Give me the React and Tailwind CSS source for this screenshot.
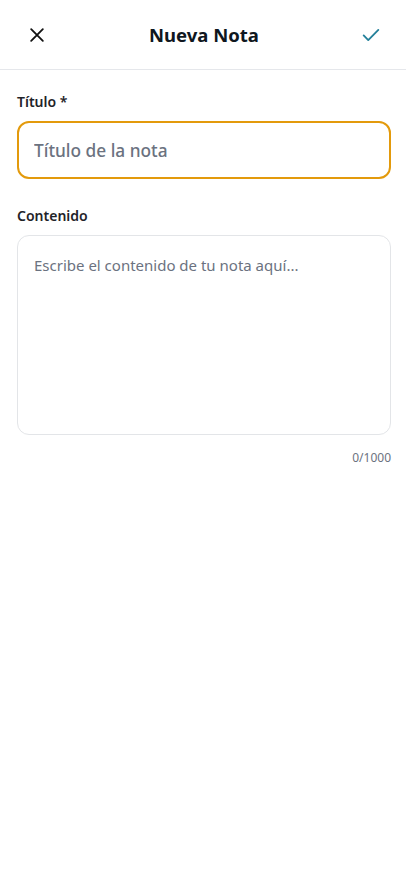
import React, { useState } from "react";

export default function App() {
  const [title, setTitle] = useState("");
  const [content, setContent] = useState("");

  return (
    <div
      className="min-h-screen bg-white text-[#1a1d21]"
      style={{ fontFamily: '"Noto Sans", "Open Sans", sans-serif' }}
    >
      {/* Header */}
      <div className="flex h-[70px] items-center justify-between border-b border-[#e5e7eb] pl-[25px] pr-[23px]">
        <button className="flex h-6 w-6 items-center justify-center text-[#111]">
          <svg width="20" height="20" viewBox="0 0 24 24" fill="none" stroke="currentColor" strokeWidth="2.2" strokeLinecap="round">
            <path d="M5 5l14 14M19 5L5 19" />
          </svg>
        </button>
        <h1 className="text-[18.5px] font-bold text-[#0f1720]">Nueva Nota</h1>
        <button className="flex h-6 w-6 items-center justify-center text-[#24809a]">
          <svg width="22" height="22" viewBox="0 0 24 24" fill="none" stroke="currentColor" strokeWidth="2" strokeLinecap="round" strokeLinejoin="round">
            <path d="M4 12.5l5 5L20 6.5" />
          </svg>
        </button>
      </div>

      <div className="pl-[17px] pr-[15px] pt-[21px]">
        <label className="block text-[14px] font-semibold text-[#1f2328]">Título *</label>
        <input
          autoFocus
          value={title}
          onChange={(e) => setTitle(e.target.value)}
          placeholder="Título de la nota"
          className="mt-[9px] h-[58px] w-full rounded-[12px] border-2 border-[#e39a0c] px-[15px] text-[17.3px] font-medium text-[#1f2328] caret-black outline-none placeholder:text-[#6b7280]"
        />

        <label className="mt-[26px] block text-[14px] font-semibold text-[#1f2328]">Contenido</label>
        <textarea
          value={content}
          onChange={(e) => setContent(e.target.value)}
          placeholder="Escribe el contenido de tu nota aquí..."
          className="mt-[9px] block h-[200px] w-full resize-none rounded-[12px] border border-[#e3e5e8] px-[16px] py-[18px] text-[15px] text-[#1f2328] outline-none placeholder:text-[#6b7280]"
        />
        <div className="mt-[14px] text-right text-[12px] text-[#6b7280]">{content.length}/1000</div>
      </div>
    </div>
  );
}
